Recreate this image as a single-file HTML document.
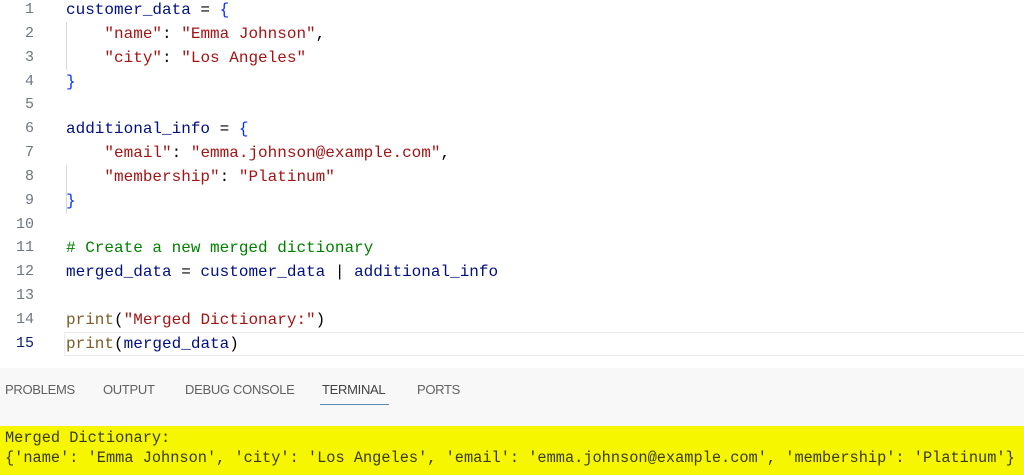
<!DOCTYPE html>
<html><head><meta charset="utf-8"><style>
*{margin:0;padding:0;box-sizing:border-box}
body{width:1024px;height:475px;overflow:hidden;background:#fff;position:relative;font-family:"Liberation Mono",monospace}
.ln{position:absolute;left:0;width:34px;text-align:right;font-size:15px;color:#6e7681;height:24px;line-height:24px}
.cd{position:absolute;left:66px;font-size:16px;white-space:pre;height:24px;line-height:24px;color:#001080}
.s{color:#a31515}.b{color:#0431fa}.c{color:#008000}.f{color:#795e26}.k{color:#001080}.o{color:#000}
.guide{position:absolute;left:66px;width:1px;background:#d8d8d8}
.tabs{position:absolute;left:0;top:368px;width:1024px;height:58px;background:#f8f8f8}
.tab{position:absolute;top:14px;font-family:"Liberation Sans",sans-serif;font-size:13px;color:#616161;letter-spacing:-0.3px}
.term{position:absolute;left:0;top:426px;width:1024px;height:49px;background:#f6f600;font-size:15.3px;color:#3a3a10;white-space:pre;padding-left:5px;line-height:20px;padding-top:2px}
</style></head><body>
<div class="guide" style="top:22px;height:48px"></div>
<div class="guide" style="top:165px;height:48px"></div>
<div style="position:absolute;left:64px;top:332px;width:960px;height:24px;border:1px solid #eaeaea;border-right:none"></div>
<div class="ln" style="top:-2px">1</div><div class="cd" style="top:-2px">customer_data <span class="o">=</span> <span class="b">{</span></div>
<div class="ln" style="top:22px">2</div><div class="cd" style="top:22px">    <span class="s">"name"</span><span class="o">:</span> <span class="s">"Emma Johnson"</span><span class="o">,</span></div>
<div class="ln" style="top:46px">3</div><div class="cd" style="top:46px">    <span class="s">"city"</span><span class="o">:</span> <span class="s">"Los Angeles"</span></div>
<div class="ln" style="top:70px">4</div><div class="cd" style="top:70px"><span class="b">}</span></div>
<div class="ln" style="top:93px">5</div>
<div class="ln" style="top:117px">6</div><div class="cd" style="top:117px">additional_info <span class="o">=</span> <span class="b">{</span></div>
<div class="ln" style="top:141px">7</div><div class="cd" style="top:141px">    <span class="s">"email"</span><span class="o">:</span> <span class="s">"emma.johnson@example.com"</span><span class="o">,</span></div>
<div class="ln" style="top:165px">8</div><div class="cd" style="top:165px">    <span class="s">"membership"</span><span class="o">:</span> <span class="s">"Platinum"</span></div>
<div class="ln" style="top:189px">9</div><div class="cd" style="top:189px"><span class="b">}</span></div>
<div class="ln" style="top:213px">10</div>
<div class="ln" style="top:236px">11</div><div class="cd c" style="top:236px"># Create a new merged dictionary</div>
<div class="ln" style="top:260px">12</div><div class="cd" style="top:260px">merged_data <span class="o">=</span> customer_data <span class="o">|</span> additional_info</div>
<div class="ln" style="top:284px">13</div>
<div class="ln" style="top:308px">14</div><div class="cd" style="top:308px"><span class="f">print</span><span class="o">(</span><span class="s">"Merged Dictionary:"</span><span class="o">)</span></div>
<div class="ln" style="top:332px;color:#0b216f">15</div><div class="cd" style="top:332px"><span class="f">print</span><span class="o">(</span>merged_data<span class="o">)</span></div>
<div class="tabs">
<span class="tab" style="left:5px">PROBLEMS</span>
<span class="tab" style="left:103px">OUTPUT</span>
<span class="tab" style="left:185px">DEBUG CONSOLE</span>
<span class="tab" style="left:322px;color:#424242">TERMINAL</span>
<span class="tab" style="left:417px">PORTS</span>
<div style="position:absolute;left:320px;top:36px;width:69px;height:1px;background:#5b8ab5"></div>
</div>
<div class="term">Merged Dictionary:
{'name': 'Emma Johnson', 'city': 'Los Angeles', 'email': 'emma.johnson@example.com', 'membership': 'Platinum'}</div>
</body></html>
